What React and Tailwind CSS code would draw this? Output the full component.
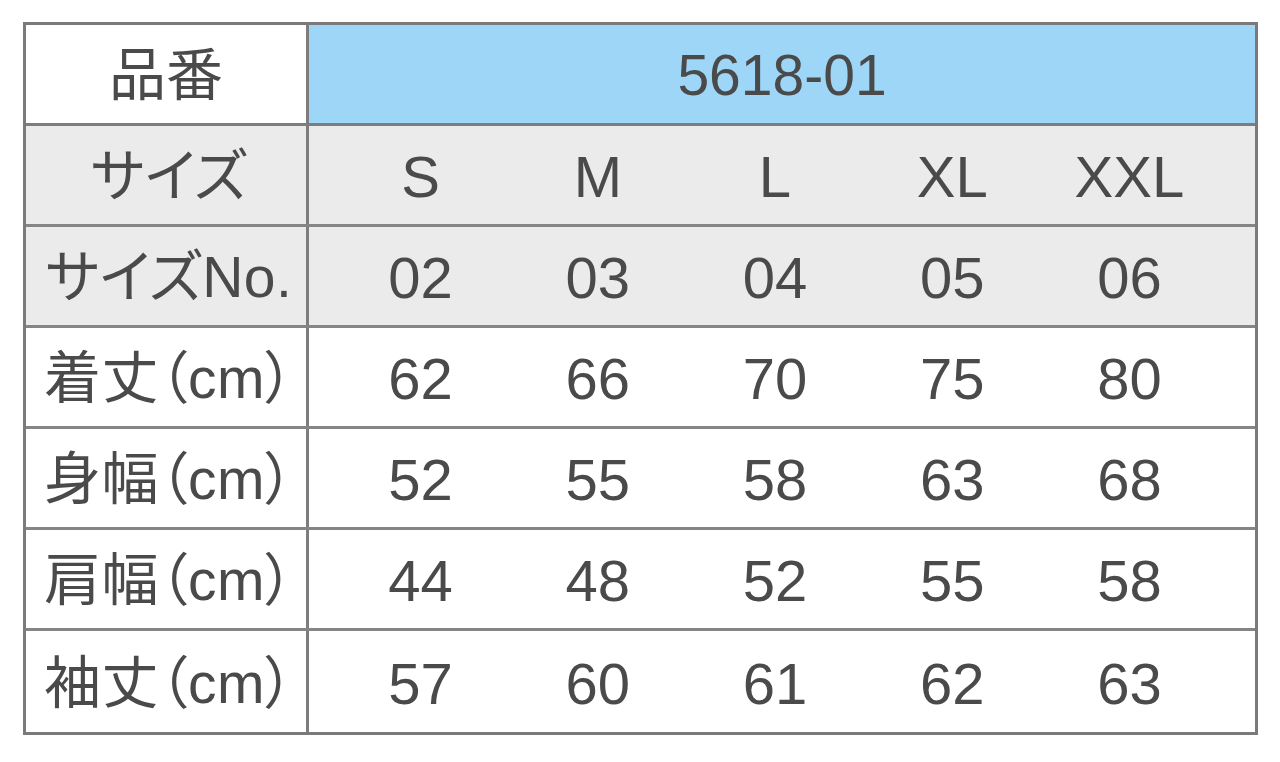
import React from 'react';

const sizes = ['S', 'M', 'L', 'XL', 'XXL'];

const rows = [
  { label: 'サイズNo.', values: ['02', '03', '04', '05', '06'], gray: true },
  { label: '着丈（cm）', values: ['62', '66', '70', '75', '80'] },
  { label: '身幅（cm）', values: ['52', '55', '58', '63', '68'] },
  { label: '肩幅（cm）', values: ['44', '48', '52', '55', '58'] },
  { label: '袖丈（cm）', values: ['57', '60', '61', '62', '63'] },
];

const font = "[font-family:'Liberation_Sans','Noto_Sans_CJK_JP',sans-serif] [font-feature-settings:'palt']";

const Row = ({ label, values, gray, last }) => (
  <div className={`flex h-[101px] ${last ? '' : 'border-b-[3px] border-[#858585]'} ${gray ? 'bg-[#ebebeb]' : 'bg-white'}`}>
    <div className="w-[283px] shrink-0 flex items-center justify-center pt-[3px] pl-[6px] border-r-[3px] border-[#7d7d7d] text-[57px] leading-none tracking-[0.5px]">
      {label}
    </div>
    <div className="flex-1 grid grid-cols-5 pl-[23px] pr-[37px] pt-[4px] text-[58px] leading-none">
      {values.map((v) => (
        <div key={v} className="flex items-center justify-center">{v}</div>
      ))}
    </div>
  </div>
);

export default function App() {
  return (
    <div className={`w-full h-[762px] bg-white pt-[22px] pl-[23px] text-[#4a4a4a] ${font}`}>
      <div className="w-[1235px] border-[3px] border-[#7a7a7a] flex flex-col">
        <div className="flex h-[101px] border-b-[3px] border-[#7d7d7d]">
          <div className="w-[283px] shrink-0 flex items-center justify-center pt-[3px] border-r-[3px] border-[#7d7d7d] bg-white text-[57px] leading-none">
            品番
          </div>
          <div className="flex-1 flex items-center justify-center pt-[3px] bg-[#9dd6f6] text-[57px] leading-none">
            5618-01
          </div>
        </div>
        <Row label="サイズ" values={sizes} gray />
        {rows.map((r, i) => (
          <Row key={r.label} {...r} last={i === rows.length - 1} />
        ))}
      </div>
    </div>
  );
}
